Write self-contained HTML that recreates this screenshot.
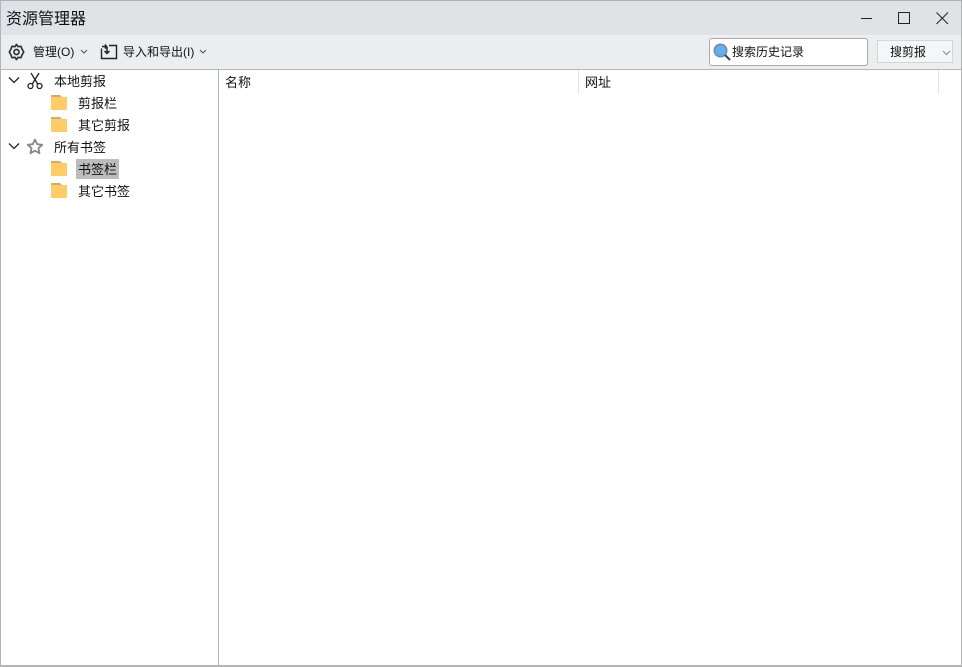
<!DOCTYPE html>
<html><head><meta charset="utf-8"><style>
html,body{margin:0;padding:0;background:#fff}
body{width:962px;height:667px;position:relative;overflow:hidden;font-family:"Liberation Sans","Noto Sans CJK SC",sans-serif;color:#111}
div,svg,span{position:absolute}
.t{font-size:13px;line-height:16px;white-space:nowrap}
.f{width:16px;height:15px}
</style></head><body>
<div style="left:0;top:0;width:962px;height:35px;background:#e0e2e6"></div>
<div style="left:0;top:35px;width:962px;height:34px;background:#ecedef"></div>
<div style="left:0;top:0;width:962px;height:1px;background:#aeb1b6"></div>
<div style="left:0;top:69px;width:962px;height:1px;background:#b4b6ba"></div>
<div style="left:0;top:0;width:1px;height:667px;background:#aeb4c4"></div>
<div style="left:961px;top:0;width:1px;height:667px;background:#b4b4b4"></div>
<div style="left:0;top:665px;width:962px;height:2px;background:#b4b4b4"></div>
<div style="left:218px;top:70px;width:1px;height:595px;background:#a9b4cc"></div>
<div style="left:578px;top:70px;width:1px;height:24px;background:#e4e4e4"></div>
<div style="left:938px;top:70px;width:1px;height:24px;background:#e4e4e4"></div>

<div style="left:6px;top:10px;font-size:16px;line-height:20px;white-space:nowrap;color:#111">资源管理器</div>

<svg style="left:860px;top:10px" width="96" height="16" fill="none" stroke="#222">
<path d="M1 8.500H12" stroke-width="1"/><rect x="38.500" y="2.500" width="11" height="11" stroke-width="1"/>
<path d="M76.500 2.500L88 14M88 2.500L76.500 14" stroke-width="1"/></svg>

<svg style="left:8px;top:43px" width="17" height="18" viewBox="0 0 17 18" fill="none" stroke="#333" stroke-width="1.700"><path d="M8.500 1.500L10 3.600 13 3.300 14 6 15.700 9 14 12 13 14.700 10 14.400 8.500 16.500 7 14.400 4 14.700 3 12 1.300 9 3 6 4 3.300 7 3.600Z" stroke-linejoin="round"/><circle cx="8.500" cy="9" r="2.500"/></svg>
<div class="t" style="left:33px;top:44px;font-size:12px">管理(O)</div>
<svg style="left:80px;top:49px" width="8" height="6" fill="none" stroke="#555"><path d="M1 1L4 4 7 1"/></svg>
<svg style="left:100px;top:43px" width="18" height="17" fill="none" stroke="#222"><path d="M1.500 5.500V15.500H16.500V2.500H9" stroke-width="1.400"/><path d="M2 3.500H6.500L5 1.500M6.500 3.500L5 5.500M7 4V10M4.500 8L7 10.500 9.500 8" stroke-width="1.500"/></svg>
<div class="t" style="left:123px;top:44px;font-size:12px">导入和导出(I)</div>
<svg style="left:199px;top:49px" width="8" height="6" fill="none" stroke="#555"><path d="M1 1L4 4 7 1"/></svg>

<div style="left:709px;top:38px;width:157px;height:26px;background:#fff;border:1px solid #a8a8a8;border-radius:3px"></div>
<svg style="left:713px;top:43px" width="18" height="18"><circle cx="7.500" cy="7.500" r="6.200" fill="#62b0f4" stroke="#7d8a94" stroke-width="1.600"/><path d="M12 12L17 17" stroke="#33434f" stroke-width="2"/></svg>
<div class="t" style="left:732px;top:44px;font-size:12px">搜索历史记录</div>
<div style="left:877px;top:40px;width:74px;height:21px;background:#f5f6f7;border:1px solid #cfd6dc"></div>
<div class="t" style="left:890px;top:44px;font-size:12px">搜剪报</div>
<svg style="left:942px;top:50px" width="9" height="6" fill="none" stroke="#888"><path d="M1 1L4.500 4.500 8 1"/></svg>

<svg style="left:8px;top:76px" width="12" height="9" fill="none" stroke="#222" stroke-width="1.300"><path d="M1 1.500L6 6.500 11 1.500"/></svg>
<svg style="left:26px;top:72px" width="18" height="18" fill="none" stroke="#222" stroke-width="1.300"><path d="M5 1L12 12.500M13 1L6 12.500"/><circle cx="4.500" cy="14" r="2.500"/><circle cx="13.500" cy="14" r="2.500"/></svg>
<div class="t" style="left:54px;top:74px">本地剪报</div>

<svg class="f" style="left:51px;top:95px"><path d="M0 0H8L10 2H16V15H0Z" fill="#ffcc66"/><path d="M0 0H9L11 2H0Z" fill="#d3ad67"/></svg>
<div class="t" style="left:78px;top:96px">剪报栏</div>
<svg class="f" style="left:51px;top:117px"><path d="M0 0H8L10 2H16V15H0Z" fill="#ffcc66"/><path d="M0 0H9L11 2H0Z" fill="#d3ad67"/></svg>
<div class="t" style="left:78px;top:118px">其它剪报</div>

<svg style="left:8px;top:142px" width="12" height="9" fill="none" stroke="#222" stroke-width="1.300"><path d="M1 1.500L6 6.500 11 1.500"/></svg>
<svg style="left:26px;top:138px" width="18" height="17" fill="none" stroke="#888" stroke-width="1.800"><path d="M9 1.500L11.200 6.200 16.200 6.800 12.500 10.200 13.500 15.200 9 12.700 4.500 15.200 5.500 10.200 1.800 6.800 6.800 6.200Z" stroke-linejoin="round"/></svg>
<div class="t" style="left:54px;top:140px">所有书签</div>

<svg class="f" style="left:51px;top:161px"><path d="M0 0H8L10 2H16V15H0Z" fill="#ffcc66"/><path d="M0 0H9L11 2H0Z" fill="#d3ad67"/></svg>
<div style="left:76px;top:159px;width:43px;height:20px;background:#bcbcbc"></div>
<div class="t" style="left:78px;top:162px">书签栏</div>
<svg class="f" style="left:51px;top:183px"><path d="M0 0H8L10 2H16V15H0Z" fill="#ffcc66"/><path d="M0 0H9L11 2H0Z" fill="#d3ad67"/></svg>
<div class="t" style="left:78px;top:184px">其它书签</div>

<div class="t" style="left:225px;top:75px">名称</div>
<div class="t" style="left:585px;top:75px">网址</div>
</body></html>
